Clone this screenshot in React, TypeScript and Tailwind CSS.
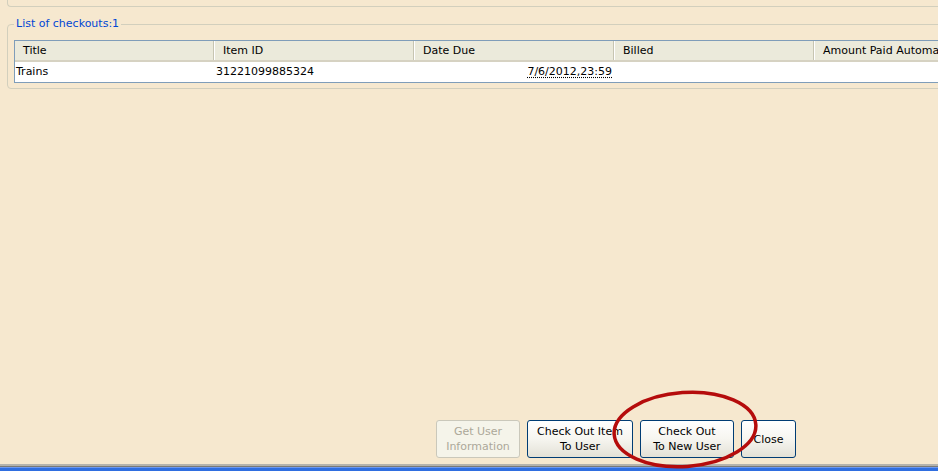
import React from "react";

const cols = ["Title", "Item ID", "Date Due", "Billed", "Amount Paid Automatically"];
const FONT = '"DejaVu Sans", Verdana, sans-serif';

function Btn({ lines, disabled, w }: { lines: string[]; disabled?: boolean; w: string }) {
  return (
    <button
      className={
        "h-[38px] shrink-0 rounded-[3px] border text-[11px] leading-[15px] flex flex-col items-center justify-center " +
        w +
        (disabled
          ? " border-[#cac8bb] bg-[#f5f4ea] text-[#aca899]"
          : " border-[#003c74] bg-gradient-to-b from-[#ffffff] via-[#f6f5f0] to-[#e3e1d6] text-black")
      }
      style={{ fontFamily: FONT }}
    >
      {lines.map((l) => (
        <span key={l} className="whitespace-nowrap">{l}</span>
      ))}
    </button>
  );
}

export default function App() {
  return (
    <div
      className="w-[938px] h-[471px] overflow-hidden bg-[#f6e8cf] flex flex-col relative"
      style={{ fontFamily: FONT }}
    >
      {/* remnant of previous group box */}
      <div className="ml-[7px] w-[1000px] h-[7px] border-l border-b border-[#d2cfbd] rounded-bl-[4px] shrink-0" />

      <fieldset className="ml-[7px] mt-[10px] w-[1100px] h-[72px] border border-[#d2cfbd] rounded-[4px] pl-[6px] shrink-0">
        <legend className="px-[2px] text-[11px] leading-[14px] text-[#0046d5]">List of checkouts:1</legend>
        <div className="mt-[9px] border border-[#7f9db9] w-[1050px] bg-white">
          <div className="flex h-[21px] bg-[#ebeadb] border-b-[2px] border-[#d6d2c2]">
            {cols.map((c, i) => (
              <div
                key={c}
                className={
                  "h-full shrink-0 text-[11px] leading-[19px] text-black whitespace-nowrap overflow-hidden " +
                  (i === 0 ? "w-[198px] pl-[8px]" : "w-[200px] pl-[9px] border-l border-[#c7c5b2] shadow-[inset_1px_0_0_#ffffff]")
                }
              >
                {c}
              </div>
            ))}
          </div>
          <div className="flex h-[20px] text-[11px] leading-[20px] text-black">
            <div className="w-[198px] shrink-0 pl-[1px]">Trains</div>
            <div className="w-[200px] shrink-0 pl-[3px]">31221099885324</div>
            <div className="w-[200px] shrink-0 text-right pr-[1px]">
              <span className="underline decoration-dotted underline-offset-[2px]">7/6/2012,23:59</span>
            </div>
            <div className="w-[200px] shrink-0" />
            <div className="w-[200px] shrink-0" />
          </div>
        </div>
      </fieldset>

      <div className="flex-1" />

      <div className="flex gap-[7px] pl-[436px] pb-[6px] shrink-0">
        <Btn lines={["Get User", "Information"]} disabled w="w-[84px]" />
        <Btn lines={["Check Out Item", "To User"]} w="w-[106px]" />
        <Btn lines={["Check Out", "To New User"]} w="w-[94px]" />
        <Btn lines={["Close"]} w="w-[55px]" />
      </div>

      <div className="h-[2px] bg-[#b4b3ad] shrink-0" />
      <div className="h-[1px] bg-[#7b7a76] shrink-0" />
      <div className="h-[1px] bg-[#6c98f0] shrink-0" />
      <div className="h-[3px] bg-[#2f6ee0] shrink-0" />

      <svg className="absolute left-[609px] top-[389px] pointer-events-none" width="152" height="82" viewBox="0 0 152 82">
        <ellipse cx="76" cy="40.5" rx="71" ry="37" fill="none" stroke="#b50c0c" strokeWidth="3.5" transform="rotate(-4 76 40.5)" />
      </svg>
    </div>
  );
}
